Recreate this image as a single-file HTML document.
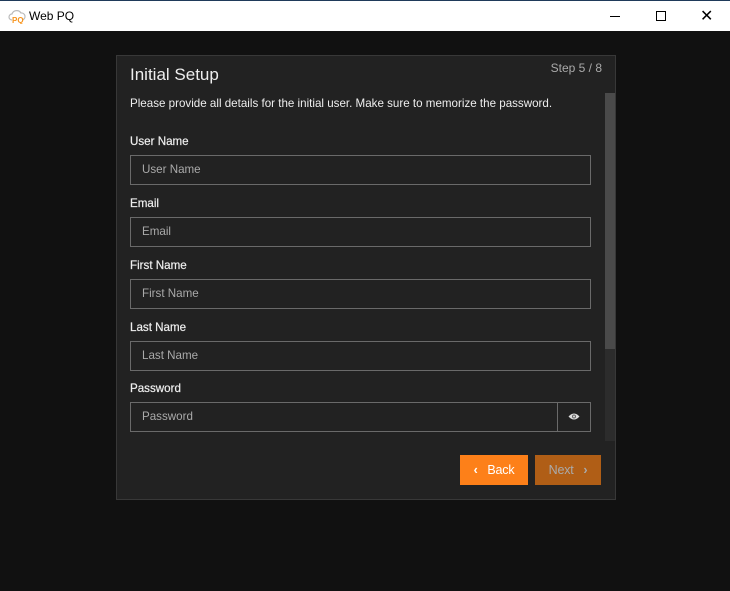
<!DOCTYPE html><html><head><style>
body{margin:0;width:730px;height:591px;background:#111;font-family:"Liberation Sans",sans-serif;position:relative;overflow:hidden}
.tb{position:absolute;left:0;top:0;width:730px;height:31px;background:#fff;border-top:1px solid #1f3a5a;box-sizing:border-box}
.tb .t{position:absolute;left:29px;top:8px;font-size:12px;color:#000}
.panel{position:absolute;left:116px;top:55px;width:498px;height:443px;background:#222;border:1px solid #383838}
.a{position:absolute}
.lbl{position:absolute;left:13px;font-size:11.6px;color:#eee;-webkit-text-stroke:0.2px #eee}
.in{position:absolute;left:13px;height:28px;border:1px solid #6a6a6a;color:#aaa;font-size:11.6px;line-height:28px;padding-left:11px;width:448px}
.btn{position:absolute;top:399px;height:30px;font-size:12.5px;line-height:30px;color:#fff;letter-spacing:-0.2px}
</style></head><body>
<div class="tb">
<svg class="a" style="left:8px;top:8px" width="18" height="15" viewBox="0 0 18 15"><path d="M4 11 A3 3 0 0 1 4 5 A5 5 0 0 1 13 4 A3.5 3.5 0 0 1 14 11" fill="none" stroke="#bbb" stroke-width="1.2"/><text x="4" y="14" font-size="8" font-weight="bold" fill="#f7941d" font-family="Liberation Sans">PQ</text></svg>
<div class="t">Web PQ</div>
<div class="a" style="left:610px;top:15px;width:10px;height:1px;background:#000"></div>
<div class="a" style="left:656px;top:10px;width:8px;height:8px;border:1px solid #000"></div>
<div class="a" style="left:700px;top:5px;font-size:16px;color:#000">✕</div>
</div>
<div class="panel">
<div class="a" style="left:13px;top:9px;font-size:17px;color:#eee">Initial Setup</div>
<div class="a" style="right:13px;top:5px;font-size:12px;color:#aaa">Step 5 / 8</div>
<div class="a" style="left:13px;top:41px;font-size:11.6px;color:#eee">Please provide all details for the initial user. Make sure to memorize the password.</div>
<div class="a" style="left:488px;top:37px;width:10px;height:348px;background:#2c2c2c"></div>
<div class="a" style="left:488px;top:37px;width:10px;height:256px;background:#4a4a4a"></div>
<div class="lbl" style="top:79px">User Name</div><div class="in" style="top:99px">User Name</div>
<div class="lbl" style="top:141px">Email</div><div class="in" style="top:161px">Email</div>
<div class="lbl" style="top:203px">First Name</div><div class="in" style="top:223px">First Name</div>
<div class="lbl" style="top:265px">Last Name</div><div class="in" style="top:285px">Last Name</div>
<div class="lbl" style="top:326px">Password</div><div class="in" style="top:346px">Password</div>
<div class="a" style="left:440px;top:346px;width:1px;height:30px;background:#6a6a6a"></div>
<svg class="a" style="left:451px;top:356px" width="12" height="9" viewBox="0 0 12 9"><path d="M0.5 4.5 Q6 -1.5 11.5 4.5 Q6 10.5 0.5 4.5Z" fill="#ddd"/><circle cx="6" cy="4.5" r="2" fill="#666"/><circle cx="6" cy="4.5" r="1" fill="#ddd"/></svg>
<div class="btn" style="left:343px;width:68px;background:#fd8019;text-align:center"><b>‹</b>&nbsp;&nbsp;&nbsp;Back</div>
<div class="btn" style="left:418px;width:66px;background:#b05e16;color:#aaa;text-align:center">Next&nbsp;&nbsp;&nbsp;<b>›</b></div>
</div>
</body></html>
